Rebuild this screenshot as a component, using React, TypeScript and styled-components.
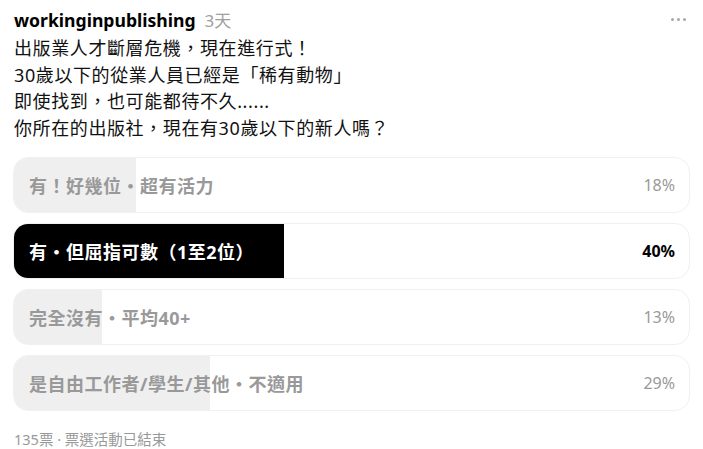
import React from 'react';
import styled, { createGlobalStyle } from 'styled-components';

type Option = {
  label: string
  percent: number
  winner?: boolean
};

const options: Option[] = [
  { label: '有！好幾位・超有活力', percent: 18 },
  { label: '有・但屈指可數（1至2位）', percent: 40, winner: true },
  { label: '完全沒有・平均40+', percent: 13 },
  { label: '是自由工作者/學生/其他・不適用', percent: 29 },
];

const lines = [
  '出版業人才斷層危機，現在進行式！',
  '30歲以下的從業人員已經是「稀有動物」',
  '即使找到，也可能都待不久......',
  '你所在的出版社，現在有30歲以下的新人嗎？',
];

const GlobalStyle = createGlobalStyle`
  body {
    margin: 0;
    background: #fff;
    font-family: "Noto Sans", "Noto Sans CJK TC", sans-serif;
    color: #000;
  }
`;

const App: React.FC = () => {
  return (
    <>
      <GlobalStyle />
      <Post>
        <Header>
          <UserRow>
            <Username>workinginpublishing</Username>
            <TimeAgo>3天</TimeAgo>
          </UserRow>
          <MoreButton aria-label="more">
            <Dot />
            <Dot />
            <Dot />
          </MoreButton>
        </Header>
        <Body>
          {lines.map((line) => (
            <Line key={line}>{line}</Line>
          ))}
        </Body>
        <Poll>
          {options.map((o) => (
            <Bar key={o.label}>
              <Fill $winner={o.winner} style={{ width: `${o.percent}%` }} />
              <BarLabel $winner={o.winner}>{o.label}</BarLabel>
              <Percent $winner={o.winner}>{o.percent}%</Percent>
            </Bar>
          ))}
        </Poll>
        <Footer>135票 · 票選活動已結束</Footer>
      </Post>
    </>
  );
};

export default App;

const Post = styled.div`
  width: 677px;
  padding: 6px 13px 0 13px;
  display: flex;
  flex-direction: column;
`;

const Header = styled.div`
  display: flex;
  justify-content: space-between;
  align-items: center;
  height: 26px;
`;

const UserRow = styled.div`
  display: flex;
  align-items: baseline;
  gap: 9px;
  padding-left: 1px;
`;

const Username = styled.span`
  font-size: 17.6px;
  font-weight: 700;
  color: #000;
`;

const TimeAgo = styled.span`
  font-size: 17px;
  color: #a0a0a0;
`;

const MoreButton = styled.div`
  display: flex;
  gap: 3px;
  align-items: center;
  margin-right: 4px;
`;

const Dot = styled.span`
  width: 3px;
  height: 3px;
  border-radius: 50%;
  background: #a8a8a8;
`;

const Body = styled.div`
  margin-top: 3px;
  padding-left: 1px;
`;

const Line = styled.div`
  font-size: 18px;
  line-height: 26.5px;
  letter-spacing: 0.6px;
  color: #111;
`;

const Poll = styled.div`
  margin-top: 16px;
  display: flex;
  flex-direction: column;
  gap: 10px;
`;

const Bar = styled.div`
  position: relative;
  height: 56px;
  border: 1px solid #f0f0f0;
  border-radius: 15px;
  overflow: hidden;
  display: flex;
  align-items: center;
  justify-content: space-between;
  padding: 0 14px 0 15px;
  box-sizing: border-box;
`;

const Fill = styled.div<{ $winner?: boolean }>`
  position: absolute;
  left: 0;
  top: 0;
  bottom: 0;
  background: ${(p) => (p.$winner ? '#000' : '#efefef')};
`;

const BarLabel = styled.span<{ $winner?: boolean }>`
  position: relative;
  font-size: 18px;
  font-weight: 700;
  letter-spacing: 0.5px;
  color: ${(p) => (p.$winner ? '#fff' : '#999')};
`;

const Percent = styled.span<{ $winner?: boolean }>`
  position: relative;
  font-size: 16px;
  font-weight: ${(p) => (p.$winner ? 700 : 400)};
  color: ${(p) => (p.$winner ? '#000' : '#999')};
`;

const Footer = styled.div`
  margin-top: 17px;
  padding-left: 1px;
  font-size: 14.5px;
  color: #999;
`;
